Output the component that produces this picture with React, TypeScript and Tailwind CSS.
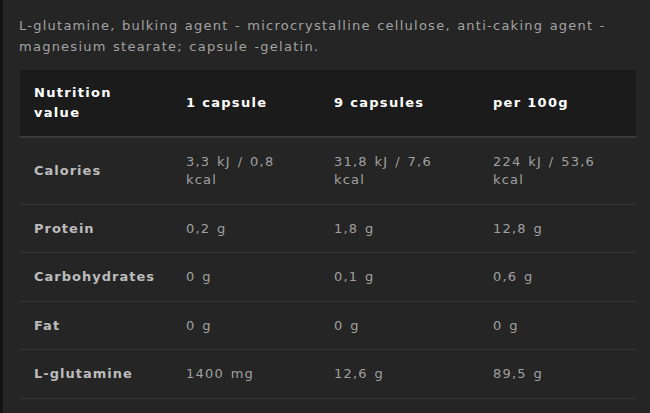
import React from "react";

const rows: { label: string; values: string[] }[] = [
  { label: "Calories", values: ["3,3 kJ / 0,8 kcal", "31,8 kJ / 7,6 kcal", "224 kJ / 53,6 kcal"] },
  { label: "Protein", values: ["0,2 g", "1,8 g", "12,8 g"] },
  { label: "Carbohydrates", values: ["0 g", "0,1 g", "0,6 g"] },
  { label: "Fat", values: ["0 g", "0 g", "0 g"] },
  { label: "L-glutamine", values: ["1400 mg", "12,6 g", "89,5 g"] },
];

const cols = "grid grid-cols-[152px_148px_159px_1fr]";

export default function App() {
  return (
    <div
      className="flex h-[413px] w-[650px] overflow-hidden bg-[#252525]"
      style={{ fontFamily: '"DejaVu Sans", Verdana, sans-serif' }}
    >
      <div className="w-[3px] shrink-0 bg-[#131313]" />
      <div className="flex-1 pl-[13px] pr-[14px] pt-[15px]">
        <p className="pl-[3px] text-[13px] leading-[21px] tracking-[1.25px] [word-spacing:1px] text-[#a2a2a2]">
          L-glutamine, bulking agent - microcrystalline cellulose, anti-caking agent -
          magnesium stearate; capsule -gelatin.
        </p>

        <div className="ml-[4px] mt-[13px]">
          {/* Header */}
          <div className={`${cols} items-center border-b-2 border-[#3a3a3a] bg-[#1b1b1b] py-[13px] text-[13px] font-bold leading-[20px] tracking-[1.3px] text-white`}>
            <div className="pl-[14px] pr-[14px]">Nutrition value</div>
            <div className="pl-[14px]">1 capsule</div>
            <div className="pl-[14px]">9 capsules</div>
            <div className="pl-[14px]">per 100g</div>
          </div>

          {/* Rows */}
          {rows.map((r) => (
            <div
              key={r.label}
              className={`${cols} items-center border-b border-[#353535] pt-[15px] pb-[14.5px] text-[13px] leading-[18px]`}
            >
              <div className="pl-[14px] font-bold tracking-[1px] text-[#bcbcbc]">{r.label}</div>
              {r.values.map((v, i) => (
                <div key={i} className="pl-[14px] pr-[22px] tracking-[1.2px] [word-spacing:1.5px] text-[#a0a0a0]">
                  {v}
                </div>
              ))}
            </div>
          ))}
        </div>
      </div>
    </div>
  );
}
